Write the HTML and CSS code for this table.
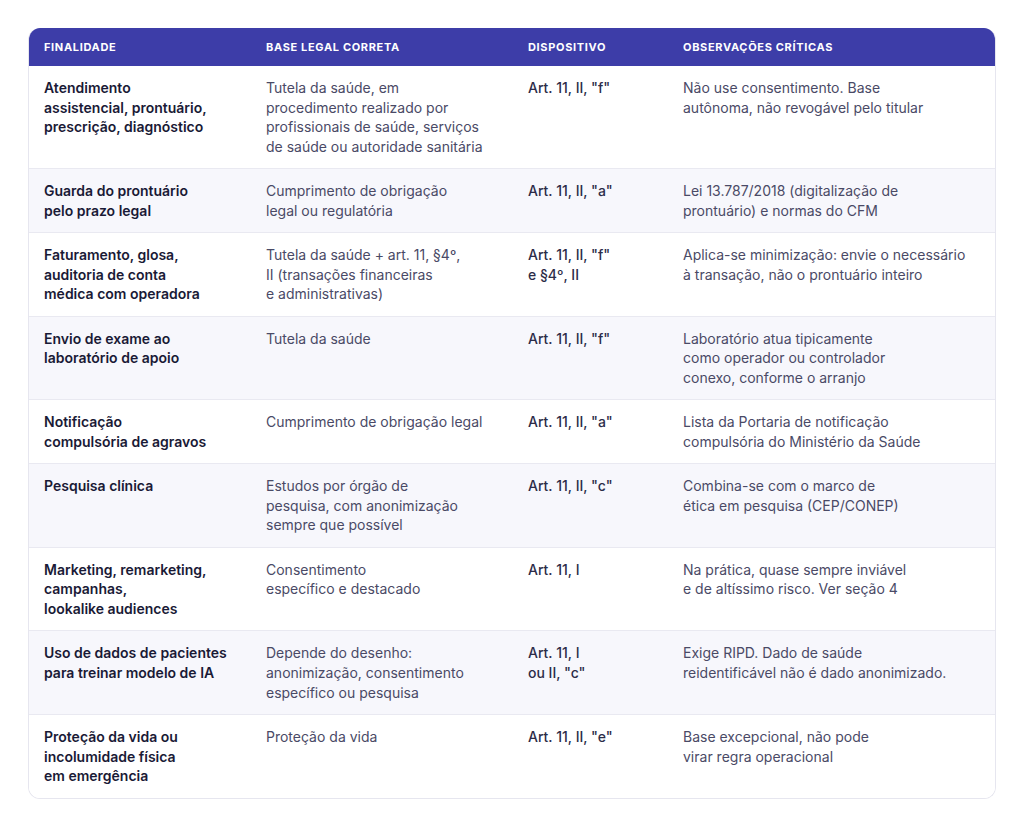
FILE: index.html
```html
<!DOCTYPE html>
<html lang="pt-BR">
<head>
<meta charset="utf-8">
<title>Bases legais – dados de saúde</title>
<link rel="stylesheet" href="styles.css">
</head>
<body>
<div class="page">
  <div class="table-wrap">
    <table class="bases">
      <colgroup>
        <col class="c-fin">
        <col class="c-base">
        <col class="c-disp">
        <col class="c-obs">
      </colgroup>
      <thead>
        <tr>
          <th>Finalidade</th>
          <th>Base legal correta</th>
          <th>Dispositivo</th>
          <th>Observações críticas</th>
        </tr>
      </thead>
      <tbody>
        <tr>
          <td class="fin">Atendimento<br>assistencial, prontuário,<br>prescrição, diagnóstico</td>
          <td class="base">Tutela da saúde, em<br>procedimento realizado por<br>profissionais de saúde, serviços<br>de saúde ou autoridade sanitária</td>
          <td class="disp">Art. 11, II, "f"</td>
          <td class="obs">Não use consentimento. Base<br>autônoma, não revogável pelo titular</td>
        </tr>
        <tr class="alt">
          <td class="fin">Guarda do prontuário<br>pelo prazo legal</td>
          <td class="base">Cumprimento de obrigação<br>legal ou regulatória</td>
          <td class="disp">Art. 11, II, "a"</td>
          <td class="obs">Lei 13.787/2018 (digitalização de<br>prontuário) e normas do CFM</td>
        </tr>
        <tr>
          <td class="fin">Faturamento, glosa,<br>auditoria de conta<br>médica com operadora</td>
          <td class="base">Tutela da saúde + art. 11, §4º,<br>II (transações financeiras<br>e administrativas)</td>
          <td class="disp">Art. 11, II, "f"<br>e §4º, II</td>
          <td class="obs">Aplica-se minimização: envie o necessário<br>à transação, não o prontuário inteiro</td>
        </tr>
        <tr class="alt">
          <td class="fin">Envio de exame ao<br>laboratório de apoio</td>
          <td class="base">Tutela da saúde</td>
          <td class="disp">Art. 11, II, "f"</td>
          <td class="obs">Laboratório atua tipicamente<br>como operador ou controlador<br>conexo, conforme o arranjo</td>
        </tr>
        <tr>
          <td class="fin">Notificação<br>compulsória de agravos</td>
          <td class="base">Cumprimento de obrigação legal</td>
          <td class="disp">Art. 11, II, "a"</td>
          <td class="obs">Lista da Portaria de notificação<br>compulsória do Ministério da Saúde</td>
        </tr>
        <tr class="alt">
          <td class="fin">Pesquisa clínica</td>
          <td class="base">Estudos por órgão de<br>pesquisa, com anonimização<br>sempre que possível</td>
          <td class="disp">Art. 11, II, "c"</td>
          <td class="obs">Combina-se com o marco de<br>ética em pesquisa (CEP/CONEP)</td>
        </tr>
        <tr>
          <td class="fin">Marketing, remarketing,<br>campanhas,<br>lookalike audiences</td>
          <td class="base">Consentimento<br>específico e destacado</td>
          <td class="disp">Art. 11, I</td>
          <td class="obs">Na prática, quase sempre inviável<br>e de altíssimo risco. Ver seção 4</td>
        </tr>
        <tr class="alt">
          <td class="fin">Uso de dados de pacientes<br>para treinar modelo de IA</td>
          <td class="base">Depende do desenho:<br>anonimização, consentimento<br>específico ou pesquisa</td>
          <td class="disp">Art. 11, I<br>ou II, "c"</td>
          <td class="obs">Exige RIPD. Dado de saúde<br>reidentificável não é dado anonimizado.</td>
        </tr>
        <tr class="last">
          <td class="fin">Proteção da vida ou<br>incolumidade física<br>em emergência</td>
          <td class="base">Proteção da vida</td>
          <td class="disp">Art. 11, II, "e"</td>
          <td class="obs">Base excepcional, não pode<br>virar regra operacional</td>
        </tr>
      </tbody>
    </table>
  </div>
</div>
</body>
</html>
```

FILE: styles.css
```css
* { box-sizing: border-box; }

html, body {
  margin: 0;
  padding: 0;
  background: #ffffff;
}

body {
  font-family: Inter, "Noto Sans", "Liberation Sans", sans-serif;
  color: #1c1c3a;
}

.page {
  padding: 28px 28px 0 28px;
}

.table-wrap {
  width: 968px;
  border: 1px solid #e6e6ef;
  border-top: none;
  border-radius: 12px;
  overflow: hidden;
}

.bases {
  width: 100%;
  border-collapse: separate;
  border-spacing: 0;
  table-layout: fixed;
}

.c-fin { width: 222px; }
.c-base { width: 262px; }
.c-disp { width: 155px; }
.c-obs { width: auto; }

.bases thead th {
  background: #3d3da8;
  color: #ffffff;
  text-align: left;
  font-size: 11px;
  font-weight: 700;
  letter-spacing: 0.06em;
  text-transform: uppercase;
  line-height: 12px;
  padding: 13px 16px 13px 15px;
}

.bases tbody td {
  vertical-align: top;
  font-size: 14px;
  line-height: 19.6px;
  padding: 12px 16px 11.8px 15px;
  border-bottom: 1px solid #e9e9f1;
  background: #ffffff;
}

.bases tbody tr.alt td {
  background: #f7f7fc;
}

.bases tbody tr.last td {
  border-bottom: none;
}

.fin {
  font-weight: 600;
  color: #1a1a36;
}

.base,
.obs {
  font-weight: 400;
  color: #4a4a66;
}

.disp {
  font-weight: 500;
  color: #2c2c48;
}
```
